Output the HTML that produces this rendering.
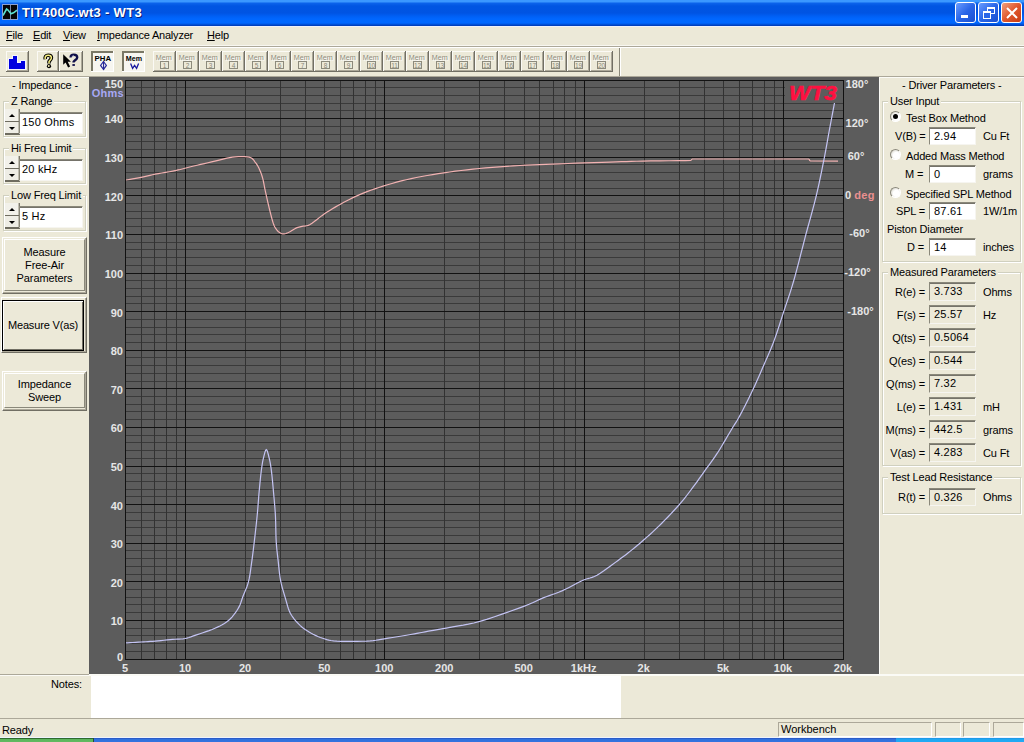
<!DOCTYPE html>
<html><head><meta charset="utf-8">
<style>
*{box-sizing:border-box}
html,body{margin:0;padding:0}
body{width:1024px;height:742px;overflow:hidden;position:relative;background:#ece9d8;font-family:"Liberation Sans",sans-serif;font-size:11px;color:#000}
.a{position:absolute}
#title{left:0;top:0;width:1024px;height:26px;background:linear-gradient(to bottom,#3a98ff 0px,#3a98ff 1.5px,#0a62ea 3.5px,#0056e2 6px,#0054e3 13px,#005ff4 16px,#0067ff 19px,#0068ff 23px,#0050d8 24.5px,#0038b0 26px)}
#ttext{left:22px;top:5px;color:#fff;font-weight:bold;font-size:13px;letter-spacing:0.3px;text-shadow:1px 1px 0 #0a1e7a}
.wb{top:2px;width:21px;height:21px;border:1px solid #fff;border-radius:3px;background:linear-gradient(135deg,#6a9cff,#2a66e8 50%,#1a50d0)}
#menu div{position:absolute;top:29px;font-size:11px;letter-spacing:-0.2px}
.tb{position:absolute;top:51px;height:21px;border:1px solid;border-color:#fff #716f64 #716f64 #fff;background:#ece9d8}
.tbp{position:absolute;top:51px;height:21px;border:1px solid;border-color:#716f64 #fff #fff #716f64;background:#f6f5ee}
.mem{position:absolute;top:51px;width:23px;height:21px;border:1px solid;border-color:#fff #716f64 #716f64 #fff;background:#ece9d8;color:#b8b4a0;font-size:9px;text-align:center;line-height:9px;padding-top:2px}
.mem span{display:inline-block;border:1px solid #aca899;width:11px;height:10px;line-height:8px;font-size:8px;margin-top:0px;color:#aca899}
.grp{position:absolute;border:1px solid #d0d0bf;border-radius:0;box-shadow:inset 1px 1px 0 #fff, 1px 1px 0 #fff}
.grp .lbl{position:absolute;top:-7px;left:5px;letter-spacing:-0.15px;background:#ece9d8;padding:0 2px;white-space:nowrap}
.ed{position:absolute;letter-spacing:0.2px;background:#fff;border:1px solid;border-color:#8a887a #f6f5f0 #f6f5f0 #8a887a;box-shadow:inset 0 1px 0 #75736a;padding-left:4px;line-height:16px}
.edg{background:#ece9d8}
.btn{position:absolute;letter-spacing:-0.1px;border:1px solid;border-color:#fff #716f64 #716f64 #fff;box-shadow:inset -1px -1px 0 #aca899;text-align:center;line-height:13px}
.yl{position:absolute;left:80px;width:43px;text-align:right;color:#e6e6e6;font-weight:bold;font-size:11px;line-height:14px}
.ohms{color:#a8a8f4;left:70px;width:54px}
.xl{position:absolute;top:661px;width:60px;text-align:center;color:#e6e6e6;font-weight:bold;font-size:11px;line-height:14px}
.pl{position:absolute;left:827px;width:60px;text-align:center;color:#e6e6e6;font-weight:bold;font-size:11px;line-height:14px}
.lab{position:absolute;white-space:nowrap;letter-spacing:-0.15px}
.radio{position:absolute;width:11px;height:11px;border-radius:50%;background:radial-gradient(circle at 60% 60%,#fff 40%,#dcdad0 80%);border:1px solid;border-color:#8a887c #fff #fff #8a887c}
</style></head><body>
<div id="title" class="a">
  <div class="a" style="left:2px;top:4px;width:16px;height:16px;background:#050505;border:1px solid #8aa0d0">
    <svg width="14" height="14" style="position:absolute;left:0;top:0"><rect x="7" y="0" width="1" height="14" fill="#7a86a8"/><polyline points="0,10.5 3.6,4 5,5 8,8.8 10.5,7.8 14,5.2" fill="none" stroke="#5ce0d0" stroke-width="1.6"/></svg>
  </div>
  <div id="ttext" class="a">TIT400C.wt3 - WT3</div>
  <div class="a wb" style="left:955px"><div class="a" style="left:5px;top:12px;width:7px;height:3px;background:#fff"></div></div>
  <div class="a wb" style="left:978px"><div class="a" style="left:8px;top:4px;width:8px;height:7px;border:1px solid #fff;border-top-width:2px"></div><div class="a" style="left:4px;top:8px;width:8px;height:8px;border:1px solid #fff;border-top-width:2px;background:#2a66e8"></div></div>
  <div class="a wb" style="left:1001px;background:linear-gradient(135deg,#f0a080,#e0582e 50%,#c83c14)"><svg class="a" style="left:3px;top:3px" width="14" height="14"><path d="M2,2 L12,12 M12,2 L2,12" stroke="#fff" stroke-width="2"/></svg></div>
</div>
<div class="a" style="left:0;top:26px;width:1024px;height:1px;background:#eef1fa"></div>
<div id="menu">
  <div style="left:6px"><u>F</u>ile</div>
  <div style="left:33px"><u>E</u>dit</div>
  <div style="left:63px"><u>V</u>iew</div>
  <div style="left:97px"><u>I</u>mpedance Analyzer</div>
  <div style="left:207px"><u>H</u>elp</div>
</div>
<div class="a" style="left:0;top:45px;width:1024px;height:1px;background:#f8f7f1"></div>
<div class="a" style="left:0;top:46px;width:1024px;height:1px;background:#aca899"></div>
<div class="a" style="left:0;top:47px;width:1024px;height:1px;background:#fff"></div>
<!-- toolbar -->
<svg class="a" style="left:0;top:0" width="640" height="76" shape-rendering="crispEdges"><rect x="6" y="51" width="23" height="21" fill="#ece9d8"/><rect x="6" y="51" width="22" height="1" fill="#fbfaf5"/><rect x="6" y="51" width="1" height="20" fill="#fbfaf5"/><rect x="6" y="71" width="23" height="1" fill="#716f64"/><rect x="28" y="51" width="1" height="21" fill="#716f64"/><rect x="7" y="70" width="21" height="1" fill="#aca899"/><rect x="27" y="52" width="1" height="19" fill="#aca899"/><path d="M9,69 V59 H13 V56 H17 V63 H21 V61 H25 V69 Z" fill="#fff" stroke="#f4f4ff" stroke-width="2.5"/><path d="M9,69 V59 H13 V56 H17 V63 H21 V61 H25 V69 Z" fill="#0000e0"/><rect x="37" y="51" width="22" height="21" fill="#ece9d8"/><rect x="37" y="51" width="21" height="1" fill="#fbfaf5"/><rect x="37" y="51" width="1" height="20" fill="#fbfaf5"/><rect x="37" y="71" width="22" height="1" fill="#716f64"/><rect x="58" y="51" width="1" height="21" fill="#716f64"/><rect x="38" y="70" width="20" height="1" fill="#aca899"/><rect x="57" y="52" width="1" height="19" fill="#aca899"/><rect x="59" y="51" width="24" height="21" fill="#ece9d8"/><rect x="59" y="51" width="23" height="1" fill="#fbfaf5"/><rect x="59" y="51" width="1" height="20" fill="#fbfaf5"/><rect x="59" y="71" width="24" height="1" fill="#716f64"/><rect x="82" y="51" width="1" height="21" fill="#716f64"/><rect x="60" y="70" width="22" height="1" fill="#aca899"/><rect x="81" y="52" width="1" height="19" fill="#aca899"/><g shape-rendering="geometricPrecision"><path d="M45.2,59.2 C44.8,56.6 45.8,55.2 48.2,55.2 C50.4,55.2 51.4,56.4 51.4,57.8 C51.4,59.6 49.6,60.4 49,61.8 L49,63.4" fill="none" stroke="#000" stroke-width="3.6"/><path d="M45.2,59.2 C44.8,56.6 45.8,55.2 48.2,55.2 C50.4,55.2 51.4,56.4 51.4,57.8 C51.4,59.6 49.6,60.4 49,61.8 L49,63.4" fill="none" stroke="#f6ee80" stroke-width="1.5"/><circle cx="49" cy="66.2" r="2.1" fill="#000"/><circle cx="48.8" cy="66" r="0.9" fill="#fff8c0"/><path d="M63.2,54.2 L63.2,64.8 L65.6,62.6 L68.1,67.6 L70.1,66.6 L67.7,61.7 L70.9,61.7 Z" fill="#000"/><path d="M70.6,57.6 C70.6,55.6 72.3,54.8 73.8,54.8 C75.8,54.8 77.2,55.8 77.2,57.4 C77.2,59.4 74.6,60 73.6,61.8 L73.6,62.4" fill="none" stroke="#10104a" stroke-width="2.4"/><path d="M71.8,57.4 C72,56.2 73,55.8 74,55.9" fill="none" stroke="#d8d8f8" stroke-width="0.9"/><rect x="72.4" y="64.1" width="2.5" height="1.8" fill="#10104a"/></g><rect x="91" y="51" width="23" height="21" fill="#f7f6f0"/><rect x="91" y="51" width="23" height="2" fill="#7a7866"/><rect x="91" y="51" width="2" height="21" fill="#7a7866"/><rect x="91" y="71" width="23" height="1" fill="#fff"/><rect x="113" y="51" width="1" height="21" fill="#fff"/><text x="94.6" y="60.6" font-family="Liberation Sans" font-weight="bold" font-size="7.6" textLength="16.5" lengthAdjust="spacingAndGlyphs" fill="#000">PHA</text><g shape-rendering="geometricPrecision"><path d="M103.5,61.5 L106.4,65.4 L103.5,69.4 L100.6,65.4 Z" fill="none" stroke="#2a2a9a" stroke-width="1.2"/><rect x="103" y="61" width="1.1" height="9" fill="#2a2a9a"/></g><rect x="122" y="51" width="23" height="21" fill="#f7f6f0"/><rect x="122" y="51" width="23" height="2" fill="#7a7866"/><rect x="122" y="51" width="2" height="21" fill="#7a7866"/><rect x="122" y="71" width="23" height="1" fill="#fff"/><rect x="144" y="51" width="1" height="21" fill="#fff"/><text x="125.8" y="60.6" font-family="Liberation Sans" font-weight="bold" font-size="7.6" textLength="16.2" lengthAdjust="spacingAndGlyphs" fill="#000">Mem</text><polyline points="130.6,63.6 132.6,68.3 134.6,65.3 136.6,68.3 138.6,63.6" fill="none" stroke="#1a1aa0" stroke-width="1.3" shape-rendering="geometricPrecision"/><rect x="153" y="51" width="23" height="21" fill="#ece9d8"/><rect x="153" y="51" width="22" height="1" fill="#fbfaf5"/><rect x="153" y="51" width="1" height="20" fill="#fbfaf5"/><rect x="153" y="71" width="23" height="1" fill="#716f64"/><rect x="175" y="51" width="1" height="21" fill="#716f64"/><rect x="154" y="70" width="21" height="1" fill="#aca899"/><rect x="174" y="52" width="1" height="19" fill="#aca899"/><text x="156.8" y="60.6" font-family="Liberation Sans" font-size="7.8" textLength="16" lengthAdjust="spacingAndGlyphs" fill="#fff">Mem</text><text x="155.8" y="59.9" font-family="Liberation Sans" font-size="7.8" textLength="16" lengthAdjust="spacingAndGlyphs" fill="#8e8c7c">Mem</text><rect x="160.5" y="61.5" width="8" height="7" fill="none" stroke="#8c8a7c" stroke-width="1"/><text x="164.5" y="67.6" text-anchor="middle" font-family="Liberation Sans" font-size="6.5" fill="#8a8878">1</text><rect x="176" y="51" width="23" height="21" fill="#ece9d8"/><rect x="176" y="51" width="22" height="1" fill="#fbfaf5"/><rect x="176" y="51" width="1" height="20" fill="#fbfaf5"/><rect x="176" y="71" width="23" height="1" fill="#716f64"/><rect x="198" y="51" width="1" height="21" fill="#716f64"/><rect x="177" y="70" width="21" height="1" fill="#aca899"/><rect x="197" y="52" width="1" height="19" fill="#aca899"/><text x="179.8" y="60.6" font-family="Liberation Sans" font-size="7.8" textLength="16" lengthAdjust="spacingAndGlyphs" fill="#fff">Mem</text><text x="178.8" y="59.9" font-family="Liberation Sans" font-size="7.8" textLength="16" lengthAdjust="spacingAndGlyphs" fill="#8e8c7c">Mem</text><rect x="183.5" y="61.5" width="8" height="7" fill="none" stroke="#8c8a7c" stroke-width="1"/><text x="187.5" y="67.6" text-anchor="middle" font-family="Liberation Sans" font-size="6.5" fill="#8a8878">2</text><rect x="199" y="51" width="23" height="21" fill="#ece9d8"/><rect x="199" y="51" width="22" height="1" fill="#fbfaf5"/><rect x="199" y="51" width="1" height="20" fill="#fbfaf5"/><rect x="199" y="71" width="23" height="1" fill="#716f64"/><rect x="221" y="51" width="1" height="21" fill="#716f64"/><rect x="200" y="70" width="21" height="1" fill="#aca899"/><rect x="220" y="52" width="1" height="19" fill="#aca899"/><text x="202.8" y="60.6" font-family="Liberation Sans" font-size="7.8" textLength="16" lengthAdjust="spacingAndGlyphs" fill="#fff">Mem</text><text x="201.8" y="59.9" font-family="Liberation Sans" font-size="7.8" textLength="16" lengthAdjust="spacingAndGlyphs" fill="#8e8c7c">Mem</text><rect x="206.5" y="61.5" width="8" height="7" fill="none" stroke="#8c8a7c" stroke-width="1"/><text x="210.5" y="67.6" text-anchor="middle" font-family="Liberation Sans" font-size="6.5" fill="#8a8878">3</text><rect x="222" y="51" width="23" height="21" fill="#ece9d8"/><rect x="222" y="51" width="22" height="1" fill="#fbfaf5"/><rect x="222" y="51" width="1" height="20" fill="#fbfaf5"/><rect x="222" y="71" width="23" height="1" fill="#716f64"/><rect x="244" y="51" width="1" height="21" fill="#716f64"/><rect x="223" y="70" width="21" height="1" fill="#aca899"/><rect x="243" y="52" width="1" height="19" fill="#aca899"/><text x="225.8" y="60.6" font-family="Liberation Sans" font-size="7.8" textLength="16" lengthAdjust="spacingAndGlyphs" fill="#fff">Mem</text><text x="224.8" y="59.9" font-family="Liberation Sans" font-size="7.8" textLength="16" lengthAdjust="spacingAndGlyphs" fill="#8e8c7c">Mem</text><rect x="229.5" y="61.5" width="8" height="7" fill="none" stroke="#8c8a7c" stroke-width="1"/><text x="233.5" y="67.6" text-anchor="middle" font-family="Liberation Sans" font-size="6.5" fill="#8a8878">4</text><rect x="245" y="51" width="23" height="21" fill="#ece9d8"/><rect x="245" y="51" width="22" height="1" fill="#fbfaf5"/><rect x="245" y="51" width="1" height="20" fill="#fbfaf5"/><rect x="245" y="71" width="23" height="1" fill="#716f64"/><rect x="267" y="51" width="1" height="21" fill="#716f64"/><rect x="246" y="70" width="21" height="1" fill="#aca899"/><rect x="266" y="52" width="1" height="19" fill="#aca899"/><text x="248.8" y="60.6" font-family="Liberation Sans" font-size="7.8" textLength="16" lengthAdjust="spacingAndGlyphs" fill="#fff">Mem</text><text x="247.8" y="59.9" font-family="Liberation Sans" font-size="7.8" textLength="16" lengthAdjust="spacingAndGlyphs" fill="#8e8c7c">Mem</text><rect x="252.5" y="61.5" width="8" height="7" fill="none" stroke="#8c8a7c" stroke-width="1"/><text x="256.5" y="67.6" text-anchor="middle" font-family="Liberation Sans" font-size="6.5" fill="#8a8878">5</text><rect x="268" y="51" width="23" height="21" fill="#ece9d8"/><rect x="268" y="51" width="22" height="1" fill="#fbfaf5"/><rect x="268" y="51" width="1" height="20" fill="#fbfaf5"/><rect x="268" y="71" width="23" height="1" fill="#716f64"/><rect x="290" y="51" width="1" height="21" fill="#716f64"/><rect x="269" y="70" width="21" height="1" fill="#aca899"/><rect x="289" y="52" width="1" height="19" fill="#aca899"/><text x="271.8" y="60.6" font-family="Liberation Sans" font-size="7.8" textLength="16" lengthAdjust="spacingAndGlyphs" fill="#fff">Mem</text><text x="270.8" y="59.9" font-family="Liberation Sans" font-size="7.8" textLength="16" lengthAdjust="spacingAndGlyphs" fill="#8e8c7c">Mem</text><rect x="275.5" y="61.5" width="8" height="7" fill="none" stroke="#8c8a7c" stroke-width="1"/><text x="279.5" y="67.6" text-anchor="middle" font-family="Liberation Sans" font-size="6.5" fill="#8a8878">6</text><rect x="291" y="51" width="23" height="21" fill="#ece9d8"/><rect x="291" y="51" width="22" height="1" fill="#fbfaf5"/><rect x="291" y="51" width="1" height="20" fill="#fbfaf5"/><rect x="291" y="71" width="23" height="1" fill="#716f64"/><rect x="313" y="51" width="1" height="21" fill="#716f64"/><rect x="292" y="70" width="21" height="1" fill="#aca899"/><rect x="312" y="52" width="1" height="19" fill="#aca899"/><text x="294.8" y="60.6" font-family="Liberation Sans" font-size="7.8" textLength="16" lengthAdjust="spacingAndGlyphs" fill="#fff">Mem</text><text x="293.8" y="59.9" font-family="Liberation Sans" font-size="7.8" textLength="16" lengthAdjust="spacingAndGlyphs" fill="#8e8c7c">Mem</text><rect x="298.5" y="61.5" width="8" height="7" fill="none" stroke="#8c8a7c" stroke-width="1"/><text x="302.5" y="67.6" text-anchor="middle" font-family="Liberation Sans" font-size="6.5" fill="#8a8878">7</text><rect x="314" y="51" width="23" height="21" fill="#ece9d8"/><rect x="314" y="51" width="22" height="1" fill="#fbfaf5"/><rect x="314" y="51" width="1" height="20" fill="#fbfaf5"/><rect x="314" y="71" width="23" height="1" fill="#716f64"/><rect x="336" y="51" width="1" height="21" fill="#716f64"/><rect x="315" y="70" width="21" height="1" fill="#aca899"/><rect x="335" y="52" width="1" height="19" fill="#aca899"/><text x="317.8" y="60.6" font-family="Liberation Sans" font-size="7.8" textLength="16" lengthAdjust="spacingAndGlyphs" fill="#fff">Mem</text><text x="316.8" y="59.9" font-family="Liberation Sans" font-size="7.8" textLength="16" lengthAdjust="spacingAndGlyphs" fill="#8e8c7c">Mem</text><rect x="321.5" y="61.5" width="8" height="7" fill="none" stroke="#8c8a7c" stroke-width="1"/><text x="325.5" y="67.6" text-anchor="middle" font-family="Liberation Sans" font-size="6.5" fill="#8a8878">8</text><rect x="337" y="51" width="23" height="21" fill="#ece9d8"/><rect x="337" y="51" width="22" height="1" fill="#fbfaf5"/><rect x="337" y="51" width="1" height="20" fill="#fbfaf5"/><rect x="337" y="71" width="23" height="1" fill="#716f64"/><rect x="359" y="51" width="1" height="21" fill="#716f64"/><rect x="338" y="70" width="21" height="1" fill="#aca899"/><rect x="358" y="52" width="1" height="19" fill="#aca899"/><text x="340.8" y="60.6" font-family="Liberation Sans" font-size="7.8" textLength="16" lengthAdjust="spacingAndGlyphs" fill="#fff">Mem</text><text x="339.8" y="59.9" font-family="Liberation Sans" font-size="7.8" textLength="16" lengthAdjust="spacingAndGlyphs" fill="#8e8c7c">Mem</text><rect x="344.5" y="61.5" width="8" height="7" fill="none" stroke="#8c8a7c" stroke-width="1"/><text x="348.5" y="67.6" text-anchor="middle" font-family="Liberation Sans" font-size="6.5" fill="#8a8878">9</text><rect x="360" y="51" width="23" height="21" fill="#ece9d8"/><rect x="360" y="51" width="22" height="1" fill="#fbfaf5"/><rect x="360" y="51" width="1" height="20" fill="#fbfaf5"/><rect x="360" y="71" width="23" height="1" fill="#716f64"/><rect x="382" y="51" width="1" height="21" fill="#716f64"/><rect x="361" y="70" width="21" height="1" fill="#aca899"/><rect x="381" y="52" width="1" height="19" fill="#aca899"/><text x="363.8" y="60.6" font-family="Liberation Sans" font-size="7.8" textLength="16" lengthAdjust="spacingAndGlyphs" fill="#fff">Mem</text><text x="362.8" y="59.9" font-family="Liberation Sans" font-size="7.8" textLength="16" lengthAdjust="spacingAndGlyphs" fill="#8e8c7c">Mem</text><rect x="367.5" y="61.5" width="8" height="7" fill="none" stroke="#8c8a7c" stroke-width="1"/><text x="371.5" y="67.6" text-anchor="middle" font-family="Liberation Sans" font-size="6.5" fill="#8a8878">10</text><rect x="383" y="51" width="23" height="21" fill="#ece9d8"/><rect x="383" y="51" width="22" height="1" fill="#fbfaf5"/><rect x="383" y="51" width="1" height="20" fill="#fbfaf5"/><rect x="383" y="71" width="23" height="1" fill="#716f64"/><rect x="405" y="51" width="1" height="21" fill="#716f64"/><rect x="384" y="70" width="21" height="1" fill="#aca899"/><rect x="404" y="52" width="1" height="19" fill="#aca899"/><text x="386.8" y="60.6" font-family="Liberation Sans" font-size="7.8" textLength="16" lengthAdjust="spacingAndGlyphs" fill="#fff">Mem</text><text x="385.8" y="59.9" font-family="Liberation Sans" font-size="7.8" textLength="16" lengthAdjust="spacingAndGlyphs" fill="#8e8c7c">Mem</text><rect x="390.5" y="61.5" width="8" height="7" fill="none" stroke="#8c8a7c" stroke-width="1"/><text x="394.5" y="67.6" text-anchor="middle" font-family="Liberation Sans" font-size="6.5" fill="#8a8878">11</text><rect x="406" y="51" width="23" height="21" fill="#ece9d8"/><rect x="406" y="51" width="22" height="1" fill="#fbfaf5"/><rect x="406" y="51" width="1" height="20" fill="#fbfaf5"/><rect x="406" y="71" width="23" height="1" fill="#716f64"/><rect x="428" y="51" width="1" height="21" fill="#716f64"/><rect x="407" y="70" width="21" height="1" fill="#aca899"/><rect x="427" y="52" width="1" height="19" fill="#aca899"/><text x="409.8" y="60.6" font-family="Liberation Sans" font-size="7.8" textLength="16" lengthAdjust="spacingAndGlyphs" fill="#fff">Mem</text><text x="408.8" y="59.9" font-family="Liberation Sans" font-size="7.8" textLength="16" lengthAdjust="spacingAndGlyphs" fill="#8e8c7c">Mem</text><rect x="413.5" y="61.5" width="8" height="7" fill="none" stroke="#8c8a7c" stroke-width="1"/><text x="417.5" y="67.6" text-anchor="middle" font-family="Liberation Sans" font-size="6.5" fill="#8a8878">12</text><rect x="429" y="51" width="23" height="21" fill="#ece9d8"/><rect x="429" y="51" width="22" height="1" fill="#fbfaf5"/><rect x="429" y="51" width="1" height="20" fill="#fbfaf5"/><rect x="429" y="71" width="23" height="1" fill="#716f64"/><rect x="451" y="51" width="1" height="21" fill="#716f64"/><rect x="430" y="70" width="21" height="1" fill="#aca899"/><rect x="450" y="52" width="1" height="19" fill="#aca899"/><text x="432.8" y="60.6" font-family="Liberation Sans" font-size="7.8" textLength="16" lengthAdjust="spacingAndGlyphs" fill="#fff">Mem</text><text x="431.8" y="59.9" font-family="Liberation Sans" font-size="7.8" textLength="16" lengthAdjust="spacingAndGlyphs" fill="#8e8c7c">Mem</text><rect x="436.5" y="61.5" width="8" height="7" fill="none" stroke="#8c8a7c" stroke-width="1"/><text x="440.5" y="67.6" text-anchor="middle" font-family="Liberation Sans" font-size="6.5" fill="#8a8878">13</text><rect x="452" y="51" width="23" height="21" fill="#ece9d8"/><rect x="452" y="51" width="22" height="1" fill="#fbfaf5"/><rect x="452" y="51" width="1" height="20" fill="#fbfaf5"/><rect x="452" y="71" width="23" height="1" fill="#716f64"/><rect x="474" y="51" width="1" height="21" fill="#716f64"/><rect x="453" y="70" width="21" height="1" fill="#aca899"/><rect x="473" y="52" width="1" height="19" fill="#aca899"/><text x="455.8" y="60.6" font-family="Liberation Sans" font-size="7.8" textLength="16" lengthAdjust="spacingAndGlyphs" fill="#fff">Mem</text><text x="454.8" y="59.9" font-family="Liberation Sans" font-size="7.8" textLength="16" lengthAdjust="spacingAndGlyphs" fill="#8e8c7c">Mem</text><rect x="459.5" y="61.5" width="8" height="7" fill="none" stroke="#8c8a7c" stroke-width="1"/><text x="463.5" y="67.6" text-anchor="middle" font-family="Liberation Sans" font-size="6.5" fill="#8a8878">14</text><rect x="475" y="51" width="23" height="21" fill="#ece9d8"/><rect x="475" y="51" width="22" height="1" fill="#fbfaf5"/><rect x="475" y="51" width="1" height="20" fill="#fbfaf5"/><rect x="475" y="71" width="23" height="1" fill="#716f64"/><rect x="497" y="51" width="1" height="21" fill="#716f64"/><rect x="476" y="70" width="21" height="1" fill="#aca899"/><rect x="496" y="52" width="1" height="19" fill="#aca899"/><text x="478.8" y="60.6" font-family="Liberation Sans" font-size="7.8" textLength="16" lengthAdjust="spacingAndGlyphs" fill="#fff">Mem</text><text x="477.8" y="59.9" font-family="Liberation Sans" font-size="7.8" textLength="16" lengthAdjust="spacingAndGlyphs" fill="#8e8c7c">Mem</text><rect x="482.5" y="61.5" width="8" height="7" fill="none" stroke="#8c8a7c" stroke-width="1"/><text x="486.5" y="67.6" text-anchor="middle" font-family="Liberation Sans" font-size="6.5" fill="#8a8878">15</text><rect x="498" y="51" width="23" height="21" fill="#ece9d8"/><rect x="498" y="51" width="22" height="1" fill="#fbfaf5"/><rect x="498" y="51" width="1" height="20" fill="#fbfaf5"/><rect x="498" y="71" width="23" height="1" fill="#716f64"/><rect x="520" y="51" width="1" height="21" fill="#716f64"/><rect x="499" y="70" width="21" height="1" fill="#aca899"/><rect x="519" y="52" width="1" height="19" fill="#aca899"/><text x="501.8" y="60.6" font-family="Liberation Sans" font-size="7.8" textLength="16" lengthAdjust="spacingAndGlyphs" fill="#fff">Mem</text><text x="500.8" y="59.9" font-family="Liberation Sans" font-size="7.8" textLength="16" lengthAdjust="spacingAndGlyphs" fill="#8e8c7c">Mem</text><rect x="505.5" y="61.5" width="8" height="7" fill="none" stroke="#8c8a7c" stroke-width="1"/><text x="509.5" y="67.6" text-anchor="middle" font-family="Liberation Sans" font-size="6.5" fill="#8a8878">16</text><rect x="521" y="51" width="23" height="21" fill="#ece9d8"/><rect x="521" y="51" width="22" height="1" fill="#fbfaf5"/><rect x="521" y="51" width="1" height="20" fill="#fbfaf5"/><rect x="521" y="71" width="23" height="1" fill="#716f64"/><rect x="543" y="51" width="1" height="21" fill="#716f64"/><rect x="522" y="70" width="21" height="1" fill="#aca899"/><rect x="542" y="52" width="1" height="19" fill="#aca899"/><text x="524.8" y="60.6" font-family="Liberation Sans" font-size="7.8" textLength="16" lengthAdjust="spacingAndGlyphs" fill="#fff">Mem</text><text x="523.8" y="59.9" font-family="Liberation Sans" font-size="7.8" textLength="16" lengthAdjust="spacingAndGlyphs" fill="#8e8c7c">Mem</text><rect x="528.5" y="61.5" width="8" height="7" fill="none" stroke="#8c8a7c" stroke-width="1"/><text x="532.5" y="67.6" text-anchor="middle" font-family="Liberation Sans" font-size="6.5" fill="#8a8878">17</text><rect x="544" y="51" width="23" height="21" fill="#ece9d8"/><rect x="544" y="51" width="22" height="1" fill="#fbfaf5"/><rect x="544" y="51" width="1" height="20" fill="#fbfaf5"/><rect x="544" y="71" width="23" height="1" fill="#716f64"/><rect x="566" y="51" width="1" height="21" fill="#716f64"/><rect x="545" y="70" width="21" height="1" fill="#aca899"/><rect x="565" y="52" width="1" height="19" fill="#aca899"/><text x="547.8" y="60.6" font-family="Liberation Sans" font-size="7.8" textLength="16" lengthAdjust="spacingAndGlyphs" fill="#fff">Mem</text><text x="546.8" y="59.9" font-family="Liberation Sans" font-size="7.8" textLength="16" lengthAdjust="spacingAndGlyphs" fill="#8e8c7c">Mem</text><rect x="551.5" y="61.5" width="8" height="7" fill="none" stroke="#8c8a7c" stroke-width="1"/><text x="555.5" y="67.6" text-anchor="middle" font-family="Liberation Sans" font-size="6.5" fill="#8a8878">18</text><rect x="567" y="51" width="23" height="21" fill="#ece9d8"/><rect x="567" y="51" width="22" height="1" fill="#fbfaf5"/><rect x="567" y="51" width="1" height="20" fill="#fbfaf5"/><rect x="567" y="71" width="23" height="1" fill="#716f64"/><rect x="589" y="51" width="1" height="21" fill="#716f64"/><rect x="568" y="70" width="21" height="1" fill="#aca899"/><rect x="588" y="52" width="1" height="19" fill="#aca899"/><text x="570.8" y="60.6" font-family="Liberation Sans" font-size="7.8" textLength="16" lengthAdjust="spacingAndGlyphs" fill="#fff">Mem</text><text x="569.8" y="59.9" font-family="Liberation Sans" font-size="7.8" textLength="16" lengthAdjust="spacingAndGlyphs" fill="#8e8c7c">Mem</text><rect x="574.5" y="61.5" width="8" height="7" fill="none" stroke="#8c8a7c" stroke-width="1"/><text x="578.5" y="67.6" text-anchor="middle" font-family="Liberation Sans" font-size="6.5" fill="#8a8878">19</text><rect x="590" y="51" width="23" height="21" fill="#ece9d8"/><rect x="590" y="51" width="22" height="1" fill="#fbfaf5"/><rect x="590" y="51" width="1" height="20" fill="#fbfaf5"/><rect x="590" y="71" width="23" height="1" fill="#716f64"/><rect x="612" y="51" width="1" height="21" fill="#716f64"/><rect x="591" y="70" width="21" height="1" fill="#aca899"/><rect x="611" y="52" width="1" height="19" fill="#aca899"/><text x="593.8" y="60.6" font-family="Liberation Sans" font-size="7.8" textLength="16" lengthAdjust="spacingAndGlyphs" fill="#fff">Mem</text><text x="592.8" y="59.9" font-family="Liberation Sans" font-size="7.8" textLength="16" lengthAdjust="spacingAndGlyphs" fill="#8e8c7c">Mem</text><rect x="597.5" y="61.5" width="8" height="7" fill="none" stroke="#8c8a7c" stroke-width="1"/><text x="601.5" y="67.6" text-anchor="middle" font-family="Liberation Sans" font-size="6.5" fill="#8a8878">20</text></svg>
<div class="a" style="left:619px;top:48px;width:1px;height:28px;background:#8a887a"></div>
<div class="a" style="left:620px;top:48px;width:1px;height:28px;background:#fff"></div>
<div class="a" style="left:0;top:76px;width:1024px;height:1px;background:#aca899"></div>
<div class="a" style="left:0;top:77px;width:89px;height:1px;background:#fbfbf6"></div>
<div class="a" style="left:879px;top:77px;width:145px;height:1px;background:#fbfbf6"></div>

<!-- left panel -->
<div class="lab" style="left:12px;top:79px">- Impedance -</div>
<div class="grp" style="left:3px;top:101px;width:83px;height:36px"><div class="lbl">Z Range</div></div>
<div class="a" style="left:5px;top:109px;width:15px;height:13px;background:#f2f1ea;border-right:1px solid #7a786c;border-bottom:1px solid #6e6c60;box-shadow:inset -1px 0 0 #c0bdb0"></div>
<div class="a" style="left:5px;top:122px;width:15px;height:13px;background:#eeede5;border-right:1px solid #7a786c;border-bottom:2px solid #6e6c60;box-shadow:inset -1px 0 0 #c0bdb0"></div>
<div class="a" style="left:9px;top:114px;width:0;height:0;border-left:3px solid transparent;border-right:3px solid transparent;border-bottom:3px solid #000"></div>
<div class="a" style="left:9px;top:127px;width:0;height:0;border-left:3px solid transparent;border-right:3px solid transparent;border-top:3px solid #000"></div>
<div class="ed" style="left:19px;top:112px;width:64px;height:22px;line-height:18px;padding-left:2px">150 Ohms</div>
<div class="grp" style="left:3px;top:148px;width:83px;height:36px"><div class="lbl">Hi Freq Limit</div></div>
<div class="a" style="left:5px;top:156px;width:15px;height:13px;background:#f2f1ea;border-right:1px solid #7a786c;border-bottom:1px solid #6e6c60;box-shadow:inset -1px 0 0 #c0bdb0"></div>
<div class="a" style="left:5px;top:169px;width:15px;height:13px;background:#eeede5;border-right:1px solid #7a786c;border-bottom:2px solid #6e6c60;box-shadow:inset -1px 0 0 #c0bdb0"></div>
<div class="a" style="left:9px;top:161px;width:0;height:0;border-left:3px solid transparent;border-right:3px solid transparent;border-bottom:3px solid #000"></div>
<div class="a" style="left:9px;top:174px;width:0;height:0;border-left:3px solid transparent;border-right:3px solid transparent;border-top:3px solid #000"></div>
<div class="ed" style="left:19px;top:159px;width:64px;height:22px;line-height:18px;padding-left:2px">20 kHz</div>
<div class="grp" style="left:3px;top:195px;width:83px;height:36px"><div class="lbl">Low Freq Limit</div></div>
<div class="a" style="left:5px;top:203px;width:15px;height:13px;background:#f2f1ea;border-right:1px solid #7a786c;border-bottom:1px solid #6e6c60;box-shadow:inset -1px 0 0 #c0bdb0"></div>
<div class="a" style="left:5px;top:216px;width:15px;height:13px;background:#eeede5;border-right:1px solid #7a786c;border-bottom:2px solid #6e6c60;box-shadow:inset -1px 0 0 #c0bdb0"></div>
<div class="a" style="left:9px;top:208px;width:0;height:0;border-left:3px solid transparent;border-right:3px solid transparent;border-bottom:3px solid #000"></div>
<div class="a" style="left:9px;top:221px;width:0;height:0;border-left:3px solid transparent;border-right:3px solid transparent;border-top:3px solid #000"></div>
<div class="ed" style="left:19px;top:206px;width:64px;height:22px;line-height:18px;padding-left:2px">5 Hz</div>
<div class="btn" style="left:2px;top:237px;width:85px;height:57px"></div>
<div class="btn" style="left:4px;top:239px;width:81px;height:52px;padding-top:6px;box-shadow:none;border-color:#fff #8a887a #8a887a #fff">Measure<br>Free-Air<br>Parameters</div>
<div class="btn" style="left:1px;top:297px;width:86px;height:56px"></div>
<div class="a" style="left:2px;top:300px;width:82px;height:51px;border:1px solid #000;box-shadow:inset 1px 1px 0 #fff,inset -1px -1px 0 #716f64;text-align:center;line-height:49px;letter-spacing:-0.15px">Measure V(as)</div>
<div class="btn" style="left:2px;top:371px;width:85px;height:40px"></div>
<div class="btn" style="left:4px;top:373px;width:81px;height:35px;padding-top:4px;box-shadow:none;border-color:#fff #8a887a #8a887a #fff">Impedance<br>Sweep</div>

<!-- chart -->
<div class="a" style="left:89px;top:77px;width:790px;height:597px;background:#5c5c5c"></div>
<svg class="a" style="left:0;top:0" width="1024" height="742" shape-rendering="crispEdges">
<rect x="125" y="651" width="719" height="1" fill="#3a3a3a"/>
<rect x="125" y="643" width="719" height="1" fill="#3a3a3a"/>
<rect x="125" y="635" width="719" height="1" fill="#3a3a3a"/>
<rect x="125" y="628" width="719" height="1" fill="#3a3a3a"/>
<rect x="125" y="612" width="719" height="1" fill="#3a3a3a"/>
<rect x="125" y="604" width="719" height="1" fill="#3a3a3a"/>
<rect x="125" y="597" width="719" height="1" fill="#3a3a3a"/>
<rect x="125" y="589" width="719" height="1" fill="#3a3a3a"/>
<rect x="125" y="574" width="719" height="1" fill="#3a3a3a"/>
<rect x="125" y="566" width="719" height="1" fill="#3a3a3a"/>
<rect x="125" y="558" width="719" height="1" fill="#3a3a3a"/>
<rect x="125" y="550" width="719" height="1" fill="#3a3a3a"/>
<rect x="125" y="535" width="719" height="1" fill="#3a3a3a"/>
<rect x="125" y="527" width="719" height="1" fill="#3a3a3a"/>
<rect x="125" y="520" width="719" height="1" fill="#3a3a3a"/>
<rect x="125" y="512" width="719" height="1" fill="#3a3a3a"/>
<rect x="125" y="496" width="719" height="1" fill="#3a3a3a"/>
<rect x="125" y="489" width="719" height="1" fill="#3a3a3a"/>
<rect x="125" y="481" width="719" height="1" fill="#3a3a3a"/>
<rect x="125" y="473" width="719" height="1" fill="#3a3a3a"/>
<rect x="125" y="458" width="719" height="1" fill="#3a3a3a"/>
<rect x="125" y="450" width="719" height="1" fill="#3a3a3a"/>
<rect x="125" y="442" width="719" height="1" fill="#3a3a3a"/>
<rect x="125" y="435" width="719" height="1" fill="#3a3a3a"/>
<rect x="125" y="419" width="719" height="1" fill="#3a3a3a"/>
<rect x="125" y="411" width="719" height="1" fill="#3a3a3a"/>
<rect x="125" y="404" width="719" height="1" fill="#3a3a3a"/>
<rect x="125" y="396" width="719" height="1" fill="#3a3a3a"/>
<rect x="125" y="381" width="719" height="1" fill="#3a3a3a"/>
<rect x="125" y="373" width="719" height="1" fill="#3a3a3a"/>
<rect x="125" y="365" width="719" height="1" fill="#3a3a3a"/>
<rect x="125" y="357" width="719" height="1" fill="#3a3a3a"/>
<rect x="125" y="342" width="719" height="1" fill="#3a3a3a"/>
<rect x="125" y="334" width="719" height="1" fill="#3a3a3a"/>
<rect x="125" y="327" width="719" height="1" fill="#3a3a3a"/>
<rect x="125" y="319" width="719" height="1" fill="#3a3a3a"/>
<rect x="125" y="303" width="719" height="1" fill="#3a3a3a"/>
<rect x="125" y="296" width="719" height="1" fill="#3a3a3a"/>
<rect x="125" y="288" width="719" height="1" fill="#3a3a3a"/>
<rect x="125" y="280" width="719" height="1" fill="#3a3a3a"/>
<rect x="125" y="265" width="719" height="1" fill="#3a3a3a"/>
<rect x="125" y="257" width="719" height="1" fill="#3a3a3a"/>
<rect x="125" y="249" width="719" height="1" fill="#3a3a3a"/>
<rect x="125" y="242" width="719" height="1" fill="#3a3a3a"/>
<rect x="125" y="226" width="719" height="1" fill="#3a3a3a"/>
<rect x="125" y="218" width="719" height="1" fill="#3a3a3a"/>
<rect x="125" y="211" width="719" height="1" fill="#3a3a3a"/>
<rect x="125" y="203" width="719" height="1" fill="#3a3a3a"/>
<rect x="125" y="188" width="719" height="1" fill="#3a3a3a"/>
<rect x="125" y="180" width="719" height="1" fill="#3a3a3a"/>
<rect x="125" y="172" width="719" height="1" fill="#3a3a3a"/>
<rect x="125" y="164" width="719" height="1" fill="#3a3a3a"/>
<rect x="125" y="149" width="719" height="1" fill="#3a3a3a"/>
<rect x="125" y="141" width="719" height="1" fill="#3a3a3a"/>
<rect x="125" y="134" width="719" height="1" fill="#3a3a3a"/>
<rect x="125" y="126" width="719" height="1" fill="#3a3a3a"/>
<rect x="125" y="110" width="719" height="1" fill="#3a3a3a"/>
<rect x="125" y="103" width="719" height="1" fill="#3a3a3a"/>
<rect x="125" y="95" width="719" height="1" fill="#3a3a3a"/>
<rect x="125" y="87" width="719" height="1" fill="#3a3a3a"/>
<rect x="141" y="80" width="1" height="580" fill="#323232"/>
<rect x="154" y="80" width="1" height="580" fill="#323232"/>
<rect x="166" y="80" width="1" height="580" fill="#323232"/>
<rect x="176" y="80" width="1" height="580" fill="#323232"/>
<rect x="245" y="80" width="1" height="580" fill="#323232"/>
<rect x="280" y="80" width="1" height="580" fill="#323232"/>
<rect x="305" y="80" width="1" height="580" fill="#323232"/>
<rect x="324" y="80" width="1" height="580" fill="#323232"/>
<rect x="340" y="80" width="1" height="580" fill="#323232"/>
<rect x="353" y="80" width="1" height="580" fill="#323232"/>
<rect x="365" y="80" width="1" height="580" fill="#323232"/>
<rect x="375" y="80" width="1" height="580" fill="#323232"/>
<rect x="444" y="80" width="1" height="580" fill="#323232"/>
<rect x="479" y="80" width="1" height="580" fill="#323232"/>
<rect x="504" y="80" width="1" height="580" fill="#323232"/>
<rect x="524" y="80" width="1" height="580" fill="#323232"/>
<rect x="539" y="80" width="1" height="580" fill="#323232"/>
<rect x="553" y="80" width="1" height="580" fill="#323232"/>
<rect x="564" y="80" width="1" height="580" fill="#323232"/>
<rect x="575" y="80" width="1" height="580" fill="#323232"/>
<rect x="644" y="80" width="1" height="580" fill="#323232"/>
<rect x="679" y="80" width="1" height="580" fill="#323232"/>
<rect x="704" y="80" width="1" height="580" fill="#323232"/>
<rect x="723" y="80" width="1" height="580" fill="#323232"/>
<rect x="739" y="80" width="1" height="580" fill="#323232"/>
<rect x="752" y="80" width="1" height="580" fill="#323232"/>
<rect x="764" y="80" width="1" height="580" fill="#323232"/>
<rect x="774" y="80" width="1" height="580" fill="#323232"/>
<rect x="125" y="659" width="719" height="1" fill="#121212"/>
<rect x="125" y="620" width="719" height="1" fill="#121212"/>
<rect x="125" y="581" width="719" height="1" fill="#121212"/>
<rect x="125" y="543" width="719" height="1" fill="#121212"/>
<rect x="125" y="504" width="719" height="1" fill="#121212"/>
<rect x="125" y="466" width="719" height="1" fill="#121212"/>
<rect x="125" y="427" width="719" height="1" fill="#121212"/>
<rect x="125" y="388" width="719" height="1" fill="#121212"/>
<rect x="125" y="350" width="719" height="1" fill="#121212"/>
<rect x="125" y="311" width="719" height="1" fill="#121212"/>
<rect x="125" y="273" width="719" height="1" fill="#121212"/>
<rect x="125" y="234" width="719" height="1" fill="#121212"/>
<rect x="125" y="195" width="719" height="1" fill="#121212"/>
<rect x="125" y="157" width="719" height="1" fill="#121212"/>
<rect x="125" y="118" width="719" height="1" fill="#121212"/>
<rect x="125" y="80" width="719" height="1" fill="#121212"/>
<rect x="125" y="80" width="1" height="580" fill="#111111"/>
<rect x="185" y="80" width="1" height="580" fill="#111111"/>
<rect x="384" y="80" width="1" height="580" fill="#111111"/>
<rect x="584" y="80" width="1" height="580" fill="#111111"/>
<rect x="783" y="80" width="1" height="580" fill="#111111"/>
<rect x="843" y="80" width="1" height="580" fill="#111111"/>
<polyline fill="none" stroke="#f2b2b2" stroke-width="1.2" shape-rendering="geometricPrecision" points="126.00,180.00 127.65,179.72 129.95,179.35 132.67,178.90 135.58,178.41 138.47,177.90 141.10,177.40 143.43,176.91 145.62,176.40 147.78,175.87 150.03,175.33 152.46,174.78 155.20,174.20 158.34,173.61 161.81,173.00 165.48,172.38 169.20,171.73 172.82,171.07 176.20,170.40 179.29,169.71 182.19,168.99 184.99,168.26 187.80,167.52 190.70,166.76 193.80,166.00 197.15,165.21 200.70,164.40 204.35,163.57 208.00,162.76 211.55,161.96 214.90,161.20 218.05,160.44 221.06,159.66 223.97,158.90 226.83,158.21 229.66,157.63 232.50,157.20 235.46,156.91 238.52,156.70 241.56,156.61 244.44,156.65 247.03,156.84 249.20,157.20 250.88,157.77 252.15,158.53 253.13,159.44 253.94,160.46 254.69,161.53 255.50,162.60 256.34,163.69 257.10,164.85 257.81,166.06 258.47,167.31 259.09,168.59 259.70,169.90 260.28,171.21 260.81,172.51 261.31,173.85 261.78,175.26 262.24,176.76 262.70,178.40 263.14,180.19 263.55,182.12 263.95,184.15 264.35,186.24 264.76,188.37 265.20,190.50 265.67,192.66 266.16,194.89 266.67,197.14 267.18,199.40 267.69,201.63 268.20,203.80 268.70,205.93 269.20,208.04 269.70,210.12 270.20,212.16 270.70,214.12 271.20,216.00 271.68,217.80 272.15,219.56 272.62,221.24 273.10,222.83 273.62,224.33 274.20,225.70 274.84,226.96 275.52,228.11 276.24,229.17 276.98,230.12 277.74,230.96 278.50,231.70 279.26,232.33 280.04,232.86 280.82,233.28 281.63,233.59 282.45,233.80 283.30,233.90 284.16,233.88 285.02,233.74 285.90,233.50 286.81,233.17 287.78,232.76 288.80,232.30 289.91,231.72 291.11,231.00 292.36,230.21 293.62,229.42 294.84,228.69 296.00,228.10 297.06,227.66 298.05,227.32 299.01,227.05 299.97,226.81 300.99,226.57 302.10,226.30 303.24,226.10 304.36,226.03 305.53,225.96 306.81,225.76 308.28,225.32 310.00,224.50 312.01,223.22 314.27,221.56 316.72,219.66 319.28,217.64 321.90,215.64 324.50,213.80 327.10,212.10 329.74,210.42 332.43,208.76 335.19,207.13 338.01,205.51 340.90,203.90 343.84,202.31 346.82,200.73 349.86,199.16 353.00,197.62 356.27,196.10 359.70,194.60 363.28,193.13 366.99,191.67 370.82,190.24 374.78,188.83 378.87,187.45 383.10,186.10 387.46,184.77 391.94,183.46 396.56,182.18 401.31,180.94 406.19,179.74 411.20,178.60 416.37,177.52 421.70,176.49 427.16,175.50 432.71,174.56 438.34,173.66 444.00,172.80 449.66,171.98 455.35,171.21 461.10,170.48 466.96,169.78 472.98,169.12 479.20,168.50 485.69,167.91 492.42,167.36 499.31,166.84 506.27,166.36 513.19,165.91 520.00,165.50 526.57,165.14 532.97,164.84 539.33,164.57 545.82,164.32 552.59,164.07 559.80,163.80 567.73,163.51 576.30,163.21 585.16,162.91 593.93,162.61 602.23,162.34 609.70,162.10 616.03,161.89 621.45,161.70 626.41,161.53 631.35,161.38 636.70,161.24 642.90,161.10 650.61,160.97 659.61,160.85 669.02,160.74 677.98,160.64 685.59,160.56 691.00,160.50"/>
<polyline fill="none" stroke="#f2b2b2" stroke-width="1.2" shape-rendering="geometricPrecision" points="692.00,159.00 809.00,159.00"/>
<polyline fill="none" stroke="#f2b2b2" stroke-width="1.2" shape-rendering="geometricPrecision" points="810.00,161.00 838.00,161.20"/>
<polyline fill="none" stroke="#f2b2b2" stroke-width="1.2" shape-rendering="geometricPrecision" points="691.00,160.50 692.00,159.00"/>
<polyline fill="none" stroke="#f2b2b2" stroke-width="1.2" shape-rendering="geometricPrecision" points="809.00,159.00 810.00,161.00"/>
<polyline fill="none" stroke="#c4c4f4" stroke-width="1.2" shape-rendering="geometricPrecision" points="126.00,642.90 127.65,642.80 129.95,642.67 132.67,642.51 135.58,642.33 138.47,642.16 141.10,642.00 143.47,641.86 145.75,641.73 148.00,641.60 150.29,641.46 152.66,641.30 155.20,641.10 157.98,640.85 160.97,640.56 164.06,640.25 167.13,639.94 170.04,639.65 172.70,639.40 175.05,639.24 177.19,639.15 179.17,639.09 181.09,638.99 183.01,638.81 185.00,638.50 186.99,638.05 188.90,637.51 190.82,636.89 192.81,636.19 194.94,635.42 197.30,634.60 199.97,633.71 202.92,632.73 206.02,631.69 209.13,630.60 212.14,629.46 214.90,628.30 217.44,627.14 219.87,625.97 222.19,624.76 224.40,623.47 226.51,622.07 228.50,620.50 230.40,618.73 232.20,616.79 233.90,614.72 235.47,612.59 236.91,610.47 238.20,608.40 239.28,606.41 240.14,604.46 240.86,602.51 241.53,600.52 242.22,598.46 243.00,596.30 243.91,594.05 244.87,591.75 245.86,589.38 246.83,586.93 247.72,584.37 248.50,581.70 249.15,578.92 249.69,576.04 250.17,573.06 250.61,569.98 251.04,566.79 251.50,563.50 251.98,560.10 252.44,556.60 252.91,553.00 253.37,549.29 253.83,545.45 254.30,541.50 254.79,537.35 255.29,533.01 255.80,528.54 256.30,524.05 256.77,519.61 257.20,515.30 257.58,511.09 257.93,506.91 258.25,502.77 258.56,498.73 258.87,494.79 259.20,491.00 259.55,487.30 259.90,483.66 260.25,480.14 260.60,476.78 260.95,473.65 261.30,470.80 261.63,468.28 261.94,466.06 262.24,464.06 262.56,462.21 262.91,460.45 263.30,458.70 263.74,456.80 264.23,454.77 264.74,452.82 265.26,451.17 265.79,450.03 266.30,449.60 266.81,450.03 267.33,451.17 267.86,452.83 268.37,454.77 268.85,456.80 269.30,458.70 269.70,460.45 270.07,462.21 270.41,464.06 270.74,466.06 271.07,468.28 271.40,470.80 271.74,473.65 272.07,476.78 272.41,480.14 272.74,483.66 273.07,487.30 273.40,491.00 273.75,494.79 274.11,498.73 274.47,502.77 274.82,506.91 275.14,511.09 275.40,515.30 275.59,519.63 275.71,524.14 275.80,528.69 275.89,533.19 276.01,537.49 276.20,541.50 276.46,545.15 276.76,548.53 277.10,551.73 277.46,554.83 277.83,557.92 278.20,561.10 278.55,564.36 278.88,567.63 279.22,570.89 279.60,574.13 280.05,577.34 280.60,580.50 281.27,583.65 282.05,586.79 282.90,589.91 283.78,592.95 284.66,595.89 285.50,598.70 286.26,601.37 286.97,603.94 287.68,606.41 288.43,608.77 289.29,611.03 290.30,613.20 291.49,615.26 292.81,617.22 294.23,619.08 295.73,620.84 297.26,622.51 298.80,624.10 300.32,625.58 301.84,626.95 303.41,628.23 305.04,629.44 306.80,630.62 308.70,631.80 310.79,633.00 313.06,634.19 315.44,635.36 317.87,636.45 320.31,637.44 322.70,638.30 324.86,639.01 326.81,639.61 328.76,640.11 330.93,640.51 333.53,640.84 336.80,641.10 341.01,641.29 346.05,641.39 351.53,641.42 357.06,641.37 362.25,641.27 366.70,641.10 370.24,640.87 373.16,640.58 375.72,640.22 378.24,639.80 381.01,639.33 384.30,638.80 388.24,638.19 392.61,637.50 397.23,636.75 401.90,635.98 406.42,635.22 410.60,634.50 414.45,633.82 418.12,633.14 421.65,632.48 425.07,631.83 428.41,631.20 431.70,630.60 434.78,630.06 437.58,629.59 440.31,629.13 443.15,628.65 446.32,628.09 450.00,627.40 454.13,626.67 458.53,625.95 463.26,625.16 468.34,624.19 473.84,622.97 479.80,621.40 486.68,619.31 494.53,616.73 502.79,613.89 510.90,611.02 518.29,608.35 524.40,606.10 529.01,604.31 532.55,602.80 535.36,601.48 537.82,600.28 540.28,599.12 543.10,597.90 546.20,596.71 549.27,595.61 552.35,594.55 555.46,593.46 558.63,592.26 561.90,590.90 565.37,589.28 569.03,587.43 572.75,585.48 576.41,583.56 579.87,581.79 583.00,580.30 585.66,579.24 587.93,578.55 590.00,578.01 592.07,577.41 594.34,576.55 597.00,575.20 600.21,573.23 603.85,570.77 607.68,568.04 611.49,565.26 615.03,562.64 618.10,560.40 620.59,558.60 622.65,557.09 624.46,555.73 626.18,554.41 627.97,553.01 630.00,551.40 632.24,549.61 634.55,547.73 636.93,545.77 639.39,543.72 641.91,541.57 644.50,539.30 647.17,536.92 649.94,534.44 652.77,531.86 655.65,529.17 658.57,526.38 661.50,523.50 664.52,520.45 667.66,517.21 670.83,513.87 673.95,510.51 676.94,507.23 679.70,504.10 682.21,501.14 684.54,498.29 686.73,495.50 688.83,492.75 690.90,489.99 693.00,487.20 695.10,484.37 697.15,481.54 699.18,478.71 701.18,475.87 703.19,473.03 705.20,470.20 707.19,467.45 709.15,464.80 711.11,462.15 713.09,459.40 715.15,456.45 717.30,453.20 719.65,449.46 722.19,445.27 724.79,440.89 727.34,436.55 729.72,432.50 731.80,429.00 733.47,426.27 734.81,424.16 735.98,422.34 737.13,420.49 738.42,418.28 740.00,415.40 741.93,411.73 744.10,407.51 746.41,402.94 748.76,398.21 751.05,393.50 753.20,389.00 755.21,384.66 757.17,380.33 759.08,376.01 760.94,371.75 762.74,367.57 764.50,363.50 766.19,359.63 767.80,355.96 769.37,352.38 770.91,348.75 772.44,344.96 774.00,340.90 775.56,336.56 777.10,332.03 778.64,327.34 780.20,322.53 781.78,317.60 783.40,312.60 785.06,307.62 786.74,302.67 788.44,297.61 790.19,292.32 791.97,286.66 793.80,280.50 795.71,273.64 797.71,266.15 799.74,258.29 801.78,250.34 803.78,242.55 805.70,235.20 807.56,228.28 809.40,221.59 811.21,215.06 812.95,208.66 814.62,202.32 816.20,196.00 817.69,189.65 819.09,183.29 820.43,177.00 821.69,170.86 822.88,164.93 824.00,159.30 825.03,154.03 825.96,149.07 826.81,144.33 827.63,139.71 828.45,135.13 829.30,130.50 830.22,125.61 831.18,120.50 832.14,115.42 833.04,110.64 833.85,106.41 834.50,103.00 834.98,100.51 835.33,98.74 835.58,97.53 835.75,96.70 835.88,96.08 836.00,95.50"/>
<rect x="785" y="81" width="58" height="22" fill="#5c5c5c"/>
</svg>
<svg class="a" style="left:779px;top:78px" width="64" height="26"><text x="10" y="22" font-family="Liberation Sans" font-weight="bold" font-style="italic" font-size="20" textLength="48" lengthAdjust="spacingAndGlyphs" fill="#ff1040" stroke="#ff1040" stroke-width="0.6">WT3</text></svg>
<div class="yl" style="top:650.0px">0</div>
<div class="yl" style="top:614.4px">10</div>
<div class="yl" style="top:575.8px">20</div>
<div class="yl" style="top:537.2px">30</div>
<div class="yl" style="top:498.6px">40</div>
<div class="yl" style="top:460.0px">50</div>
<div class="yl" style="top:421.4px">60</div>
<div class="yl" style="top:382.8px">70</div>
<div class="yl" style="top:344.2px">80</div>
<div class="yl" style="top:305.6px">90</div>
<div class="yl" style="top:267.0px">100</div>
<div class="yl" style="top:228.4px">110</div>
<div class="yl" style="top:189.8px">120</div>
<div class="yl" style="top:151.2px">130</div>
<div class="yl" style="top:111.6px">140</div>
<div class="yl" style="top:77px">150</div>
<div class="yl ohms" style="top:86px;letter-spacing:0.3px">Ohms</div>
<div class="xl" style="left:95.0px">5</div>
<div class="xl" style="left:155.0px">10</div>
<div class="xl" style="left:215.0px">20</div>
<div class="xl" style="left:294.3px">50</div>
<div class="xl" style="left:354.3px">100</div>
<div class="xl" style="left:414.3px">200</div>
<div class="xl" style="left:493.7px">500</div>
<div class="xl" style="left:553.7px">1kHz</div>
<div class="xl" style="left:613.7px">2k</div>
<div class="xl" style="left:693.0px">5k</div>
<div class="xl" style="left:753.0px">10k</div>
<div class="xl" style="left:813.0px">20k</div>
<div class="pl" style="top:77.0px;left:827px">180&deg;</div>
<div class="pl" style="top:115.5px;left:827px">120&deg;</div>
<div class="pl" style="top:149.0px;left:826px">60&deg;</div>
<div class="pl" style="top:226.0px;left:829.5px">-60&deg;</div>
<div class="pl" style="top:265.0px;left:827.5px">-120&deg;</div>
<div class="pl" style="top:303.7px;left:830.5px">-180&deg;</div>
<div class="pl" style="top:187.8px;left:845px;text-align:left">0 <span style="color:#ea9090;letter-spacing:0.4px">deg</span></div>

<!-- right panel -->
<div class="a" style="left:879px;top:77px;width:1px;height:597px;background:#fbfbf6"></div>
<div class="lab" style="left:902px;top:79px">- Driver Parameters -</div>
<div class="grp" style="left:882px;top:101px;width:139px;height:161px"><div class="lbl">User Input</div></div>
<div class="radio" style="left:890px;top:111px"><div class="a" style="left:2px;top:2px;width:5px;height:5px;border-radius:50%;background:#000"></div></div>
<div class="lab" style="left:906px;top:112px">Test Box Method</div>
<div class="radio" style="left:890px;top:149px"></div>
<div class="lab" style="left:906px;top:150px">Added Mass Method</div>
<div class="radio" style="left:890px;top:187px"></div>
<div class="lab" style="left:906px;top:188px">Specified SPL Method</div>
<div class="lab" style="left:895px;top:130px">V(B) =</div>
<div class="ed" style="left:929px;top:127px;width:47px;height:18px;line-height:17px">2.94</div>
<div class="lab" style="left:983px;top:130px">Cu Ft</div>
<div class="lab" style="left:905px;top:168px">M =</div>
<div class="ed" style="left:929px;top:165px;width:47px;height:18px;line-height:17px">0</div>
<div class="lab" style="left:983px;top:168px">grams</div>
<div class="lab" style="left:896px;top:205px">SPL =</div>
<div class="ed" style="left:929px;top:202px;width:47px;height:18px;line-height:17px">87.61</div>
<div class="lab" style="left:983px;top:205px">1W/1m</div>
<div class="lab" style="left:907px;top:241px">D =</div>
<div class="ed" style="left:929px;top:238px;width:47px;height:18px;line-height:17px">14</div>
<div class="lab" style="left:983px;top:241px">inches</div>
<div class="lab" style="left:887px;top:223px">Piston Diameter</div>
<div class="grp" style="left:882px;top:272px;width:139px;height:194px"><div class="lbl">Measured Parameters</div></div>
<div class="lab" style="left:883px;top:286.3px;width:42px;text-align:right">R(e) =</div>
<div class="ed edg" style="left:929px;top:282.3px;width:47px;height:19px;line-height:16px">3.733</div>
<div class="lab" style="left:983px;top:286.3px">Ohms</div>
<div class="lab" style="left:883px;top:309.2px;width:42px;text-align:right">F(s) =</div>
<div class="ed edg" style="left:929px;top:305.2px;width:47px;height:19px;line-height:16px">25.57</div>
<div class="lab" style="left:983px;top:309.2px">Hz</div>
<div class="lab" style="left:883px;top:332.2px;width:42px;text-align:right">Q(ts) =</div>
<div class="ed edg" style="left:929px;top:328.2px;width:47px;height:19px;line-height:16px">0.5064</div>
<div class="lab" style="left:983px;top:332.2px"></div>
<div class="lab" style="left:883px;top:355.1px;width:42px;text-align:right">Q(es) =</div>
<div class="ed edg" style="left:929px;top:351.1px;width:47px;height:19px;line-height:16px">0.544</div>
<div class="lab" style="left:983px;top:355.1px"></div>
<div class="lab" style="left:883px;top:378.0px;width:42px;text-align:right">Q(ms) =</div>
<div class="ed edg" style="left:929px;top:374.0px;width:47px;height:19px;line-height:16px">7.32</div>
<div class="lab" style="left:983px;top:378.0px"></div>
<div class="lab" style="left:883px;top:401.0px;width:42px;text-align:right">L(e) =</div>
<div class="ed edg" style="left:929px;top:397.0px;width:47px;height:19px;line-height:16px">1.431</div>
<div class="lab" style="left:983px;top:401.0px">mH</div>
<div class="lab" style="left:883px;top:423.9px;width:42px;text-align:right">M(ms) =</div>
<div class="ed edg" style="left:929px;top:419.9px;width:47px;height:19px;line-height:16px">442.5</div>
<div class="lab" style="left:983px;top:423.9px">grams</div>
<div class="lab" style="left:883px;top:446.8px;width:42px;text-align:right">V(as) =</div>
<div class="ed edg" style="left:929px;top:442.8px;width:47px;height:19px;line-height:16px">4.283</div>
<div class="lab" style="left:983px;top:446.8px">Cu Ft</div>
<div class="grp" style="left:882px;top:477px;width:139px;height:37px"><div class="lbl">Test Lead Resistance</div></div>
<div class="lab" style="left:883px;top:491px;width:42px;text-align:right">R(t) =</div>
<div class="ed edg" style="left:929px;top:488px;width:47px;height:18px;line-height:16px">0.326</div>
<div class="lab" style="left:983px;top:491px">Ohms</div>

<!-- notes -->
<div class="a" style="left:0;top:674px;width:1024px;height:2px;background:#fbfbf6"></div>
<div class="a" style="left:0;top:674px;width:89px;height:1px;background:#aca899"></div>
<div class="lab" style="left:51px;top:678px">Notes:</div>
<div class="a" style="left:91px;top:676px;width:530px;height:42px;background:#fff"></div>
<div class="a" style="left:0;top:718px;width:1024px;height:1px;background:#aca899"></div>
<div class="lab" style="left:2px;top:724px">Ready</div>
<div class="a" style="left:778px;top:722px;width:154px;height:15px;border:1px solid;border-color:#aca899 #fff #fff #aca899;padding-left:2px;line-height:13px">Workbench</div>
<div class="a" style="left:935px;top:722px;width:26px;height:15px;border:1px solid;border-color:#aca899 #fff #fff #aca899"></div>
<div class="a" style="left:963px;top:722px;width:27px;height:15px;border:1px solid;border-color:#aca899 #fff #fff #aca899"></div>
<div class="a" style="left:993px;top:722px;width:31px;height:15px;border:1px solid;border-color:#aca899 #fff #fff #aca899"></div>
<!-- taskbar -->
<div class="a" style="left:0;top:737px;width:1024px;height:1px;background:#eef3fc"></div>
<div class="a" style="left:0;top:738px;width:1024px;height:4px;background:linear-gradient(to bottom,#2a5cc8 0px,#2a5cc8 1px,#3070dc 1px,#3474e0 4px)"></div>
<div class="a" style="left:0;top:738px;width:94px;height:4px;background:linear-gradient(to bottom,#2f6a2f 0px,#2f6a2f 1px,#5cb55c 1px,#62ba62 4px)"></div>
<div class="a" style="left:93px;top:738px;width:1px;height:4px;background:#2a4a3a"></div>
<div class="a" style="left:896px;top:738px;width:128px;height:4px;background:linear-gradient(to bottom,#1e9ae8 0px,#1e9ae8 1px,#20a8f2 1px,#20aaf4 4px)"></div>
</body></html>
